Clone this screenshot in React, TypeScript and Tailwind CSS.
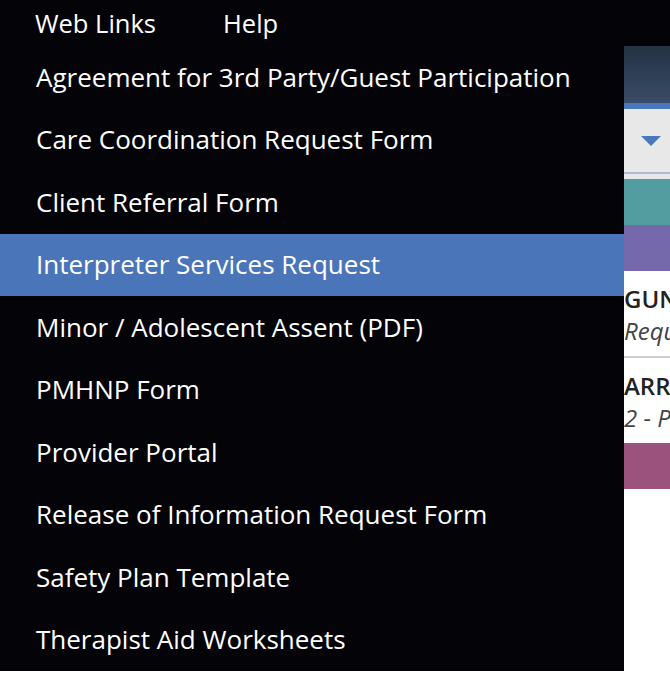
const LINKS = [
  'Agreement for 3rd Party/Guest Participation',
  'Care Coordination Request Form',
  'Client Referral Form',
  'Interpreter Services Request',
  'Minor / Adolescent Assent (PDF)',
  'PMHNP Form',
  'Provider Portal',
  'Release of Information Request Form',
  'Safety Plan Template',
  'Therapist Aid Worksheets',
];

const ACTIVE = 'Interpreter Services Request';

export default function App() {
  return (
    <div className="relative w-[670px] h-[696px] overflow-hidden bg-white font-['Open_Sans',sans-serif]">
      {/* Top nav */}
      <nav className="h-[46px] bg-[#040408] flex items-center text-white text-[25.5px]">
        <span className="ml-[35px]">Web Links</span>
        <span className="ml-[67px]">Help</span>
      </nav>

      {/* Page behind the menu */}
      <div className="flex flex-col">
        <div className="h-[57px] bg-gradient-to-b from-[#243243] to-[#3a4c68]" />
        <div className="h-[6px] bg-[#4a78bd]" />
        <div className="h-[63px] bg-[#e8e8e8] flex items-center">
          <svg className="ml-[641px]" width="20" height="10" viewBox="0 0 20 10">
            <polygon points="0,0 20,0 10,10" fill="#4a78bd" />
          </svg>
        </div>
        <div className="h-[2px] bg-[#afbbd0]" />
        <div className="h-[5px] bg-[#e8e8e8]" />
        <div className="h-[46px] bg-[#539c9f]" />
        <div className="h-[46px] bg-[#7669ab]" />
        <div className="pl-[624px] whitespace-nowrap text-[24px] text-[#222]">
          <div className="h-[87px] pt-[12px] border-b-2 border-[#cfcfcf]">
            <div className="font-semibold leading-[32px]">GUNDERSON</div>
            <div className="italic text-[#444] leading-[32px]">Request</div>
          </div>
          <div className="h-[85px] pt-[12px]">
            <div className="font-semibold leading-[32px]">ARRIVED</div>
            <div className="italic text-[#444] leading-[32px]">2 - Pending</div>
          </div>
        </div>
        <div className="h-[46px] bg-[#9b527d]" />
      </div>

      {/* Web Links dropdown */}
      <ul className="absolute top-[46px] left-0 w-[624px] bg-[#040408] text-white text-[26px]">
        {LINKS.map((l) => (
          <li
            key={l}
            className={`h-[62.5px] flex items-center pl-[36px] whitespace-nowrap ${
              l === ACTIVE ? 'bg-[#4b75b9]' : ''
            }`}
          >
            {l}
          </li>
        ))}
      </ul>
    </div>
  );
}
